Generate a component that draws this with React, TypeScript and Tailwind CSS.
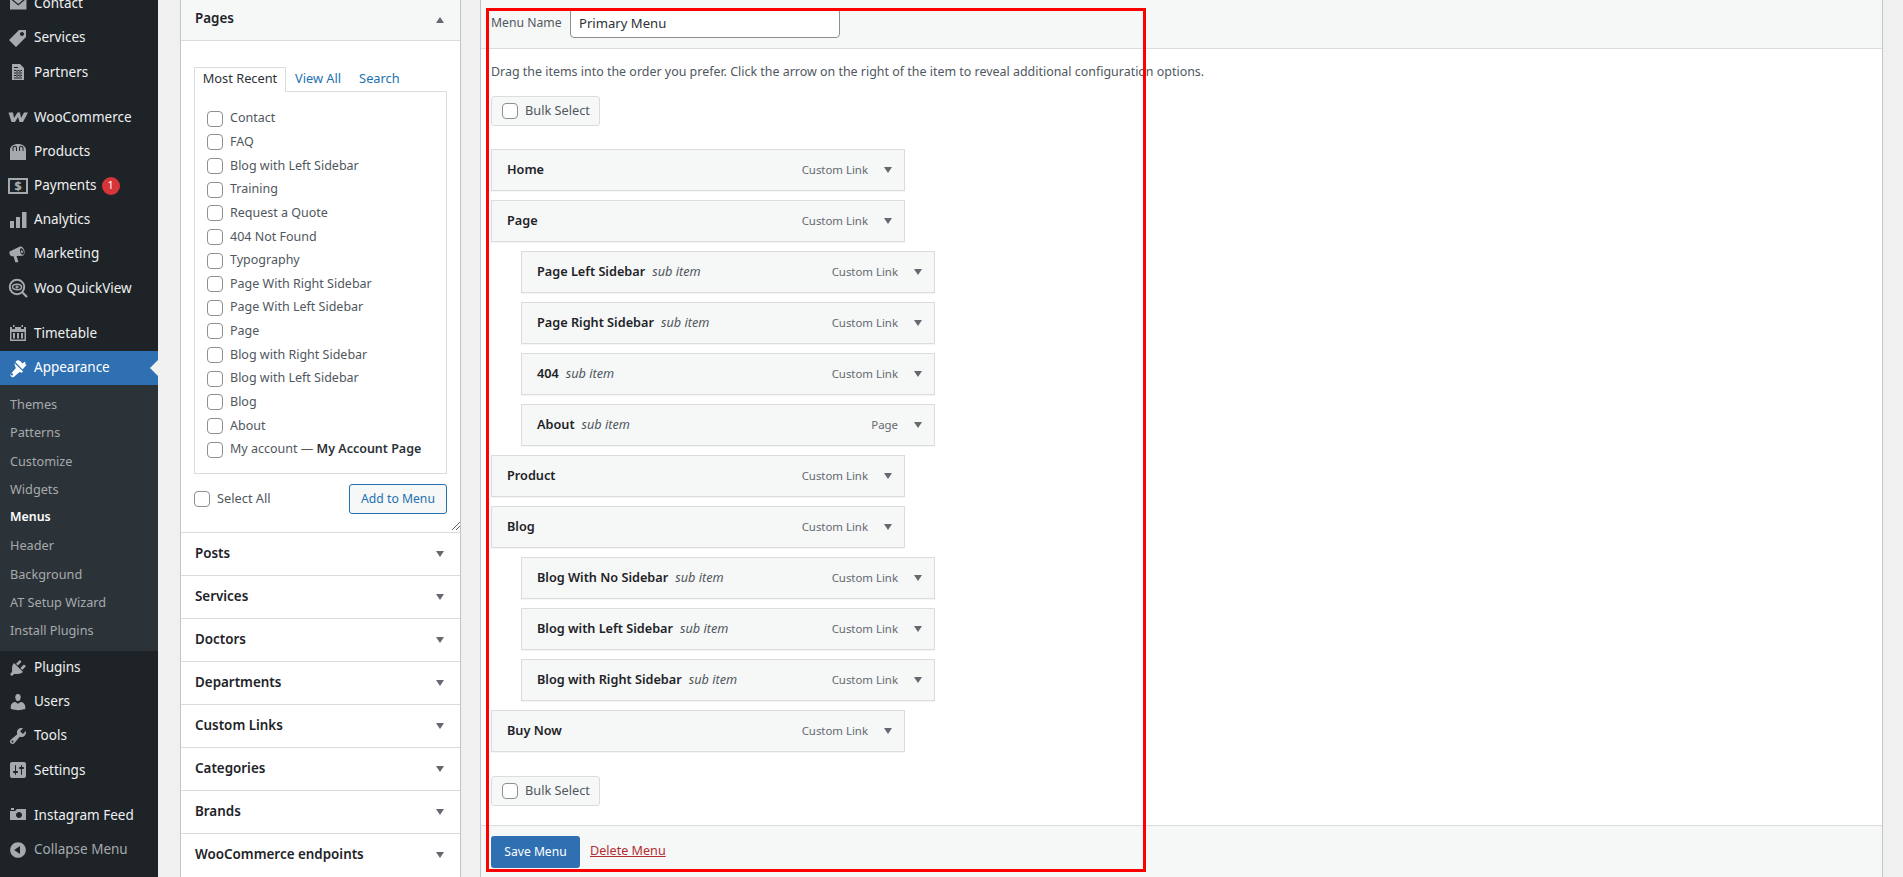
const FONT = "font-['Noto_Sans',sans-serif]";

function Dash({ d, className = "" }: { d: string; className?: string }) {
  return (
    <svg viewBox="0 0 20 20" className={`h-5 w-5 fill-[#a7aaad] ${className}`}>
      <path d={d} fillRule="evenodd" />
    </svg>
  );
}

const icons: Record<string, React.ReactNode> = {
  contact: <Dash d="M2 3.500h16.500v12H2zM3.800 4.500L10.250 10l6.450-5.500.8.900-7.250 6.200L3 5.400z" />,
  tag: <Dash d="M11 2h7v7L8 19l-7-7zm3 6c1.100 0 2-.9 2-2s-.9-2-2-2-2 .9-2 2 .9 2 2 2z" />,
  sheet: (
    <Dash d="M12 2l4 4v12H4V2h8zM6 5v1h4V5H6zm0 3v1h8V8H6zm0 2.500v1h8v-1H6zm0 2.500v1h8v-1H6zm0 2.500v1h8v-1H6zM8.500 8v8h1V8h-1zm3 0v8h1V8h-1z" />
  ),
  woo: <Dash d="M0.500 5.500H5L6 11l3.500-5.500H12L13 11l3-5.500h4L15 15h-3.500L10 10l-3 5H3.500z" />,
  bag: (
    <Dash d="M2 18V8.500C2 4.500 5 2 10 2s8 2.500 8 6.500V18H2zM5.500 9V6.500C5.500 5.300 6 4.700 6.800 4.700S8 5.300 8 6.500V9h1V6C9 4.500 8.200 3.700 6.800 3.700S4.500 4.500 4.500 6V9h1zm6.500 0V6.500c0-1.200.5-1.800 1.200-1.800s1.300.6 1.300 1.800V9h1V6c0-1.500-.9-2.300-2.300-2.300S11 4.500 11 6v3h1z" />
  ),
  payments: (
    <svg viewBox="0 0 20 16" className="h-4 w-5 overflow-visible">
      <rect x="1" y="1" width="18" height="14" fill="none" stroke="#a7aaad" strokeWidth="2" />
      <text x="10" y="12.600" textAnchor="middle" fontSize="12.500" fontWeight="800" fill="#a7aaad" fontFamily="Noto Sans, sans-serif">$</text>
    </svg>
  ),
  bars: <Dash d="M2 11h4v7H2zM8 7h4v11H8zM14 2h4.500v16H14z" />,
  megaphone: (
    <Dash d="M1.500 7.500l10.500-5c1.800-.5 3.500 1 4.300 3.800.7 2.800 0 5-1.800 5.500L8.500 12l1.800 5.500-.5.8H7.300l-1.800-6H4c-1.200 0-2-1.200-2.400-2.400-.2-.9-.2-1.800-.1-2.400zM13 4.200c-1 .3-1.300 2-.8 3.800s1.700 3 2.700 2.700 1.300-2 .8-3.800-1.700-3-2.700-2.700zm.5 2c.6-.2 1.100.3 1.300 1.100s0 1.500-.5 1.700-1.100-.3-1.300-1.100 0-1.500.5-1.700z" />
  ),
  quick: (
    <svg viewBox="0 0 20 20" className="h-5 w-5 fill-none stroke-[#a7aaad]">
      <circle cx="9" cy="9" r="7.200" strokeWidth="2" />
      <path d="M14.500 14.500L19 19" strokeWidth="2.200" />
      <ellipse cx="9" cy="9" rx="4.500" ry="2.800" strokeWidth="1.500" />
      <circle cx="9" cy="9" r="1" strokeWidth="1.200" />
    </svg>
  ),
  calendar: (
    <Dash d="M5 2h1.500v2H5V2zm8.500 0H15v2h-1.500V2zM2 4h2v2h3V4h6v2h3V4h2v14H2V4zm1.500 5v7.500h13V9h-13zM5 10h2v5.500H5V10zm4 0h2v5.500H9V10zm4 0h2v5.500h-2V10z" />
  ),
  brush: (
    <svg viewBox="0 0 20 20" className="h-5 w-5 fill-white">
      <path d="M7.400 4l1.500-1.500c.5-.6 2.300-.5 3.500.8l2.200 2.200 2-1.800.9.9-.2 1.400 1.200 1-4 4.500zM6.400 5l8.600 8.600-1.200 1.200-2.200-.9-5.500 4.800c-.9.8-2.200.7-3-.1s-.8-2.100 0-3l4.800-5.500-.9-2.200zM4 15.300a1.100 1.100 0 1 0 0 2.200 1.100 1.100 0 0 0 0-2.200z" />
    </svg>
  ),
  plugin: (
    <Dash d="M13.110 4.360L9.870 7.600 8 5.730l3.240-3.240c.35-.34 1.050-.2 1.560.32.52.51.66 1.210.31 1.550zm-8 1.770l.91-1.120 9.010 9.010-1.190.84c-.71.71-2.630 1.160-3.820 1.160H6.140L4.900 17.260c-.59.59-1.540.59-2.120 0-.59-.58-.59-1.530 0-2.120l1.240-1.240v-3.880c0-1.130.4-3.190 1.090-3.890zm7.260 3.970l3.240-3.240c.34-.35 1.040-.21 1.550.31.52.51.66 1.210.31 1.550l-3.240 3.250z" />
  ),
  user: (
    <Dash d="M10 9.250c-2.270 0-2.730-3.440-2.730-3.440C7 4.020 7.820 2 9.970 2c2.160 0 2.980 2.020 2.710 3.810 0 0-.41 3.440-2.680 3.440zm0 2.570L12.720 10c2.390 0 4.520 2.330 4.520 4.530v2.490s-3.650 1.130-7.240 1.130c-3.650 0-7.240-1.130-7.240-1.130v-2.490c0-2.250 1.940-4.480 4.470-4.480z" />
  ),
  tools: (
    <Dash d="M16.680 9.770c-1.340 1.340-3.300 1.670-4.950.99l-5.410 6.520c-.99.99-2.590.99-3.580 0s-.99-2.590 0-3.570l6.520-5.420c-.68-1.650-.35-3.610.99-4.950 1.280-1.280 3.120-1.620 4.720-1.060l-2.890 2.890 2.820 2.820 2.860-2.870c.53 1.580.18 3.390-1.080 4.650zM3.810 16.210c.4.39 1.040.39 1.430 0 .4-.4.4-1.040 0-1.430-.39-.4-1.030-.4-1.430 0-.39.39-.39 1.030 0 1.430z" />
  ),
  settings: (
    <Dash d="M18 16V4c0-1.100-.9-2-2-2H4c-1.100 0-2 .9-2 2v12c0 1.100.9 2 2 2h12c1.100 0 2-.9 2-2zM8 11h1c.55 0 1 .45 1 1s-.45 1-1 1H8v1.500c0 .28-.22.5-.5.5s-.5-.22-.5-.5V13H6c-.55 0-1-.45-1-1s.45-1 1-1h1V5.500c0-.28.22-.5.5-.5s.5.22.5.5V11zm5-2h-1c-.55 0-1-.45-1-1s.45-1 1-1h1V5.500c0-.28.22-.5.5-.5s.5.22.5.5V7h1c.55 0 1 .45 1 1s-.45 1-1 1h-1v5.500c0 .28-.22.5-.5.5s-.5-.22-.5-.5V9z" />
  ),
  camera: <Dash d="M6 5V3H3v2h3zm12 10V4H9L7 6H2v9h16zm-7-8c1.660 0 3 1.340 3 3s-1.340 3-3 3-3-1.340-3-3 1.340-3 3-3z" />,
  collapse: <Dash d="M10 2.160c4.330 0 7.840 3.510 7.840 7.840s-3.510 7.840-7.840 7.840S2.160 14.330 2.160 10 5.710 2.160 10 2.160zm2 11.720V6.120L6.180 9.970z" />,
};

const groups = [
  [
    ["contact", "Contact"],
    ["tag", "Services"],
    ["sheet", "Partners"],
  ],
  [
    ["woo", "WooCommerce"],
    ["bag", "Products"],
    ["payments", "Payments"],
    ["bars", "Analytics"],
    ["megaphone", "Marketing"],
    ["quick", "Woo QuickView"],
  ],
];

const subMenu = ["Themes", "Patterns", "Customize", "Widgets", "Menus", "Header", "Background", "AT Setup Wizard", "Install Plugins"];

const pagesList = [
  "Contact",
  "FAQ",
  "Blog with Left Sidebar",
  "Training",
  "Request a Quote",
  "404 Not Found",
  "Typography",
  "Page With Right Sidebar",
  "Page With Left Sidebar",
  "Page",
  "Blog with Right Sidebar",
  "Blog with Left Sidebar",
  "Blog",
  "About",
];

const accordions = ["Posts", "Services", "Doctors", "Departments", "Custom Links", "Categories", "Brands", "WooCommerce endpoints"];

const menuItems = [
  { title: "Home", type: "Custom Link" },
  { title: "Page", type: "Custom Link" },
  { title: "Page Left Sidebar", type: "Custom Link", sub: true },
  { title: "Page Right Sidebar", type: "Custom Link", sub: true },
  { title: "404", type: "Custom Link", sub: true },
  { title: "About", type: "Page", sub: true },
  { title: "Product", type: "Custom Link" },
  { title: "Blog", type: "Custom Link" },
  { title: "Blog With No Sidebar", type: "Custom Link", sub: true },
  { title: "Blog with Left Sidebar", type: "Custom Link", sub: true },
  { title: "Blog with Right Sidebar", type: "Custom Link", sub: true },
  { title: "Buy Now", type: "Custom Link" },
];

function NavRow({ icon, label, muted, badge }: { icon: string; label: string; muted?: boolean; badge?: string }) {
  return (
    <div className={`flex h-[34.2px] items-center text-[13.5px] ${muted ? "text-[#a7aaad]" : "text-[#f0f0f1]"}`}>
      <span className="flex w-[34px] justify-center pl-px">{icons[icon]}</span>
      <span className="pb-px">{label}</span>
      {badge && (
        <span className="ml-[5px] flex h-[18px] w-[18px] items-center justify-center rounded-full bg-[#d63638] text-[11px] text-white">
          {badge}
        </span>
      )}
    </div>
  );
}

function Sidebar() {
  return (
    <aside className="h-full w-[158px] shrink-0 overflow-hidden bg-[#1d2327]">
      <div className="-mt-[13.3px]">
        {groups.map((group, i) => (
          <div key={i} className="mb-[11px]">
            {group.map(([icon, label]) => (
              <NavRow key={label} icon={icon} label={label} badge={label === "Payments" ? "1" : undefined} />
            ))}
          </div>
        ))}
        <NavRow icon="calendar" label="Timetable" />
        <div className="relative flex h-[34px] items-center bg-[#2f70b2] text-[13.5px] text-white">
          <span className="flex w-[34px] justify-center pl-px">{icons.brush}</span>
          <span className="pb-px">Appearance</span>
          <span className="absolute right-0 top-[9px] h-0 w-0 border-y-8 border-r-8 border-y-transparent border-r-[#f0f0f1]" />
        </div>
        <div className="h-[266px] bg-[#2c3338] pt-[6px]">
          {subMenu.map((label) => (
            <div
              key={label}
              className={`flex h-[28.25px] items-center pl-[10px] ${label === "Menus" ? "text-[12.4px] font-semibold text-white" : "text-[12.7px] text-[#a7aaad]"}`}
            >
              {label}
            </div>
          ))}
        </div>
        <div className="mb-[11px]">
          <NavRow icon="plugin" label="Plugins" />
          <NavRow icon="user" label="Users" />
          <NavRow icon="tools" label="Tools" />
          <NavRow icon="settings" label="Settings" />
        </div>
        <NavRow icon="camera" label="Instagram Feed" />
        <NavRow icon="collapse" label="Collapse Menu" muted />
      </div>
    </aside>
  );
}

function Check() {
  return <input type="checkbox" className="h-4 w-4 shrink-0 appearance-none rounded-[4px] border border-[#8c8f94] bg-white" />;
}

function Arrow({ up }: { up?: boolean }) {
  return (
    <span className={`h-0 w-0 border-x-4 border-x-transparent ${up ? "border-b-[6px] border-b-[#646970]" : "border-t-[6px] border-t-[#646970]"}`} />
  );
}

function PagesBox() {
  return (
    <div className="h-[900px] w-[281px] shrink-0 border-x border-[#c3c4c7] bg-white text-[12.5px] text-[#50575e]">
      <div className="flex h-[41px] items-center justify-between border-b border-[#dcdcde] bg-[#f6f7f7] pl-[14px] pr-4">
        <span className="pb-[3px] text-[13.4px] font-semibold text-[#1d2327]">Pages</span>
        <Arrow up />
      </div>
      <div className="relative h-[491px] px-[13px] pt-[26px]">
        <div className="flex h-6 items-center">
          <span className="relative z-10 flex h-[25px] w-[92px] items-center justify-center border-x border-t border-[#dcdcde] bg-white pb-[2px] text-[12.8px] text-[#2c3338]">
            Most Recent
          </span>
          <span className="ml-[9px] text-[12.8px] text-[#2271b1]">View All</span>
          <span className="ml-[18px] text-[12.8px] text-[#2271b1]">Search</span>
        </div>
        <div className="h-[383px] w-[253px] border border-[#dcdcde] px-3 pt-[15px]">
          {pagesList.map((page, i) => (
            <label key={i} className="flex h-[23.64px] items-center gap-[7px]">
              <Check />
              <span>{page}</span>
            </label>
          ))}
          <label className="flex h-[23.64px] items-center gap-[7px]">
            <Check />
            <span>
              My account — <b className="font-semibold text-[#2c3338]">My Account Page</b>
            </span>
          </label>
        </div>
        <div className="mt-[10px] flex h-[30px] w-[253px] items-center justify-between">
          <label className="flex items-center gap-[7px]">
            <Check />
            <span className="text-[12.8px]">Select All</span>
          </label>
          <button className="h-[30px] w-[98px] rounded-[3px] border border-[#2271b1] bg-[#f6f7f7] text-[12.2px] text-[#2271b1]">
            Add to Menu
          </button>
        </div>
        <svg viewBox="0 0 8 8" className="absolute bottom-[2px] right-0 h-2 w-2 stroke-[#646970]">
          <path d="M0 8L8 0M4 8L8 4" strokeWidth="1" />
        </svg>
      </div>
      {accordions.map((name) => (
        <div key={name} className="flex h-[43px] items-center justify-between border-t border-[#dcdcde] pl-[14px] pr-4">
          <span className="pb-[2px] text-[13.4px] font-semibold text-[#1d2327]">{name}</span>
          <Arrow />
        </div>
      ))}
    </div>
  );
}

function BulkSelect() {
  return (
    <label className="flex h-[30px] w-[109px] items-center gap-[7px] rounded-[3px] border border-[#dcdcde] bg-[#f6f7f7] pl-[10px] text-[12.75px] text-[#50575e]">
      <Check />
      <span>Bulk Select</span>
    </label>
  );
}

function MenuItem({ title, type, sub }: { title: string; type: string; sub?: boolean }) {
  return (
    <div
      className={`flex h-[42px] w-[414px] items-center border border-[#dcdcde] bg-[#f6f7f7] pl-[15px] pr-3 shadow-[0_1px_1px_rgba(0,0,0,0.04)] ${sub ? "ml-[30px]" : ""}`}
    >
      <span className="text-[12.7px] font-semibold text-[#1d2327]">{title}</span>
      {sub && <span className="ml-[7px] text-[12.7px] italic text-[#50575e]">sub item</span>}
      <span className="ml-auto mr-4 text-[11.4px] text-[#646970]">{type}</span>
      <Arrow />
    </div>
  );
}

function MenuPanel() {
  return (
    <div className="flex h-[900px] w-[1403px] shrink-0 flex-col self-start border-x border-[#c3c4c7] bg-white text-[12.45px] text-[#50575e]">
      <div className="h-[49px] border-b border-[#dcdcde] bg-[#f6f7f7] px-[10px] pt-2">
        <div className="flex h-[30px] items-center">
          <span className="w-[79px] text-[12.2px]">Menu Name</span>
          <input
            readOnly
            value="Primary Menu"
            className="h-[30px] w-[270px] rounded-[4px] border border-[#8c8f94] bg-white px-2 pb-px text-[13.1px] text-[#2c3338]"
          />
        </div>
      </div>
      <div className="h-[776px] px-[10px] pt-[13px]">
        <p className="h-5 leading-5">Drag the items into the order you prefer. Click the arrow on the right of the item to reveal additional configuration options.</p>
        <div className="mt-[14px]">
          <BulkSelect />
        </div>
        <div className="mt-[23px] flex flex-col gap-[9px]">
          {menuItems.map((item) => (
            <MenuItem key={item.title} {...item} />
          ))}
        </div>
        <div className="mt-6">
          <BulkSelect />
        </div>
      </div>
      <div className="flex flex-1 items-start gap-[10px] border-t border-[#dcdcde] bg-[#f6f7f7] px-[10px] pt-[10px]">
        <button className="h-8 w-[89px] rounded-[3px] bg-[#2f70b2] text-[12.1px] text-white">Save Menu</button>
        <a className="mt-[6px] text-[12.6px] text-[#b32d2e] underline">Delete Menu</a>
      </div>
    </div>
  );
}

export default function App() {
  return (
    <div className={`relative flex h-[877px] w-[1903px] overflow-hidden bg-[#f0f0f1] ${FONT}`}>
      <Sidebar />
      <div className="ml-[22px] flex gap-[19px]">
        <PagesBox />
        <MenuPanel />
      </div>
      <div className="pointer-events-none absolute left-[486px] top-2 h-[864px] w-[660px] border-[3px] border-[#ff0000]" />
    </div>
  );
}
